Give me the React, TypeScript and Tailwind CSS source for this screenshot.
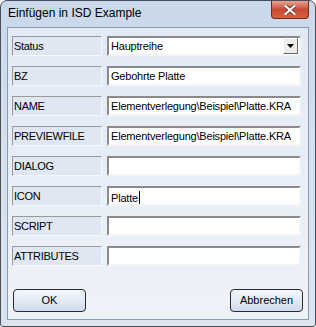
import React from "react";

const rows = [
  { label: "Status", value: "Hauptreihe", combo: true },
  { label: "BZ", value: "Gebohrte Platte" },
  { label: "NAME", value: "Elementverlegung\\Beispiel\\Platte.KRA" },
  { label: "PREVIEWFILE", value: "Elementverlegung\\Beispiel\\Platte.KRA" },
  { label: "DIALOG", value: "" },
  { label: "ICON", value: "Platte", caret: true },
  { label: "SCRIPT", value: "" },
  { label: "ATTRIBUTES", value: "" },
];

const uiFont = { fontFamily: "'Liberation Sans', Arial, sans-serif" };

function Field({ value, combo, caret }: { value: string; combo?: boolean; caret?: boolean }) {
  return (
    <div className="flex h-[20px] w-[194px] items-center overflow-hidden border-2 border-t-[#8a8a8a] border-l-[#8a8a8a] border-b-[#f4f4f4] border-r-[#f4f4f4] bg-white pl-[2px]">
      <span className="flex-1 whitespace-nowrap text-[11px] leading-none tracking-[-0.2px] text-black">
        {value}
        {caret && <span className="ml-[1px] inline-block h-[13px] w-px translate-y-[2px] bg-black" />}
      </span>
      {combo && (
        <div className="mr-[1px] flex h-[16px] w-[15px] items-center justify-center border border-t-white border-l-white border-b-[#6a6a6a] border-r-[#6a6a6a] bg-[#ececec]">
          <svg width="7" height="4" viewBox="0 0 7 4">
            <path d="M0 0h7L3.5 4z" fill="#000" />
          </svg>
        </div>
      )}
    </div>
  );
}

export default function App() {
  return (
    <div
      className="relative flex h-[327px] w-[316px] flex-col rounded-t-[7px] rounded-b-[3px] border border-[#4a4f57] bg-gradient-to-b from-[#c9d8ea] via-[#d6e1ee] to-[#dbe5f1]"
      style={uiFont}
    >
      <div className="flex h-[26px] items-start justify-between">
        <span className="pl-[7px] pt-[6px] text-[12px] leading-none text-black">Einfügen in ISD Example</span>
        <button className="mr-[6px] flex h-[18px] w-[38px] items-center justify-center rounded-b-[4px] border border-t-0 border-[#6b2a22] bg-gradient-to-b from-[#e8a293] via-[#c94a36] to-[#d4633f]">
          <svg width="12" height="10" viewBox="0 0 12 10">
            <path d="M1.5 1l9 8M10.5 1l-9 8" stroke="#4a1a14" strokeWidth="3.4" strokeLinecap="square" />
            <path d="M1.5 1l9 8M10.5 1l-9 8" stroke="#fff" strokeWidth="2.2" strokeLinecap="square" />
          </svg>
        </button>
      </div>

      <div className="mx-[6px] mb-[6px] flex flex-1 flex-col border border-[#8b9cb2] bg-gradient-to-b from-[#e2eaf5] to-[#eef2f9]">
        <div className="flex flex-col gap-[10px] px-[4px] pt-[8px]">
          {rows.map((r) => (
            <div key={r.label} className="flex gap-[5px]">
              <div className="flex h-[20px] w-[90px] items-center border border-t-[#9a9a9a] border-l-[#9a9a9a] border-b-[#f6f8fb] border-r-[#f6f8fb] bg-[#dfe7f2] pl-[1px]">
                <span className="text-[11px] leading-none tracking-[-0.3px] text-black">{r.label}</span>
              </div>
              <Field value={r.value} combo={r.combo} caret={r.caret} />
            </div>
          ))}
        </div>

        <div className="mt-auto flex justify-between px-[5px] pb-[7px]">
          {["OK", "Abbrechen"].map((t) => (
            <button
              key={t}
              className="flex h-[23px] w-[73px] items-center justify-center rounded-[4px] border border-[#2b2b2b] bg-gradient-to-b from-[#f3f6fb] via-[#e3eaf4] to-[#cfdcec] text-[11px] leading-none text-black"
            >
              {t}
            </button>
          ))}
        </div>
      </div>
    </div>
  );
}
